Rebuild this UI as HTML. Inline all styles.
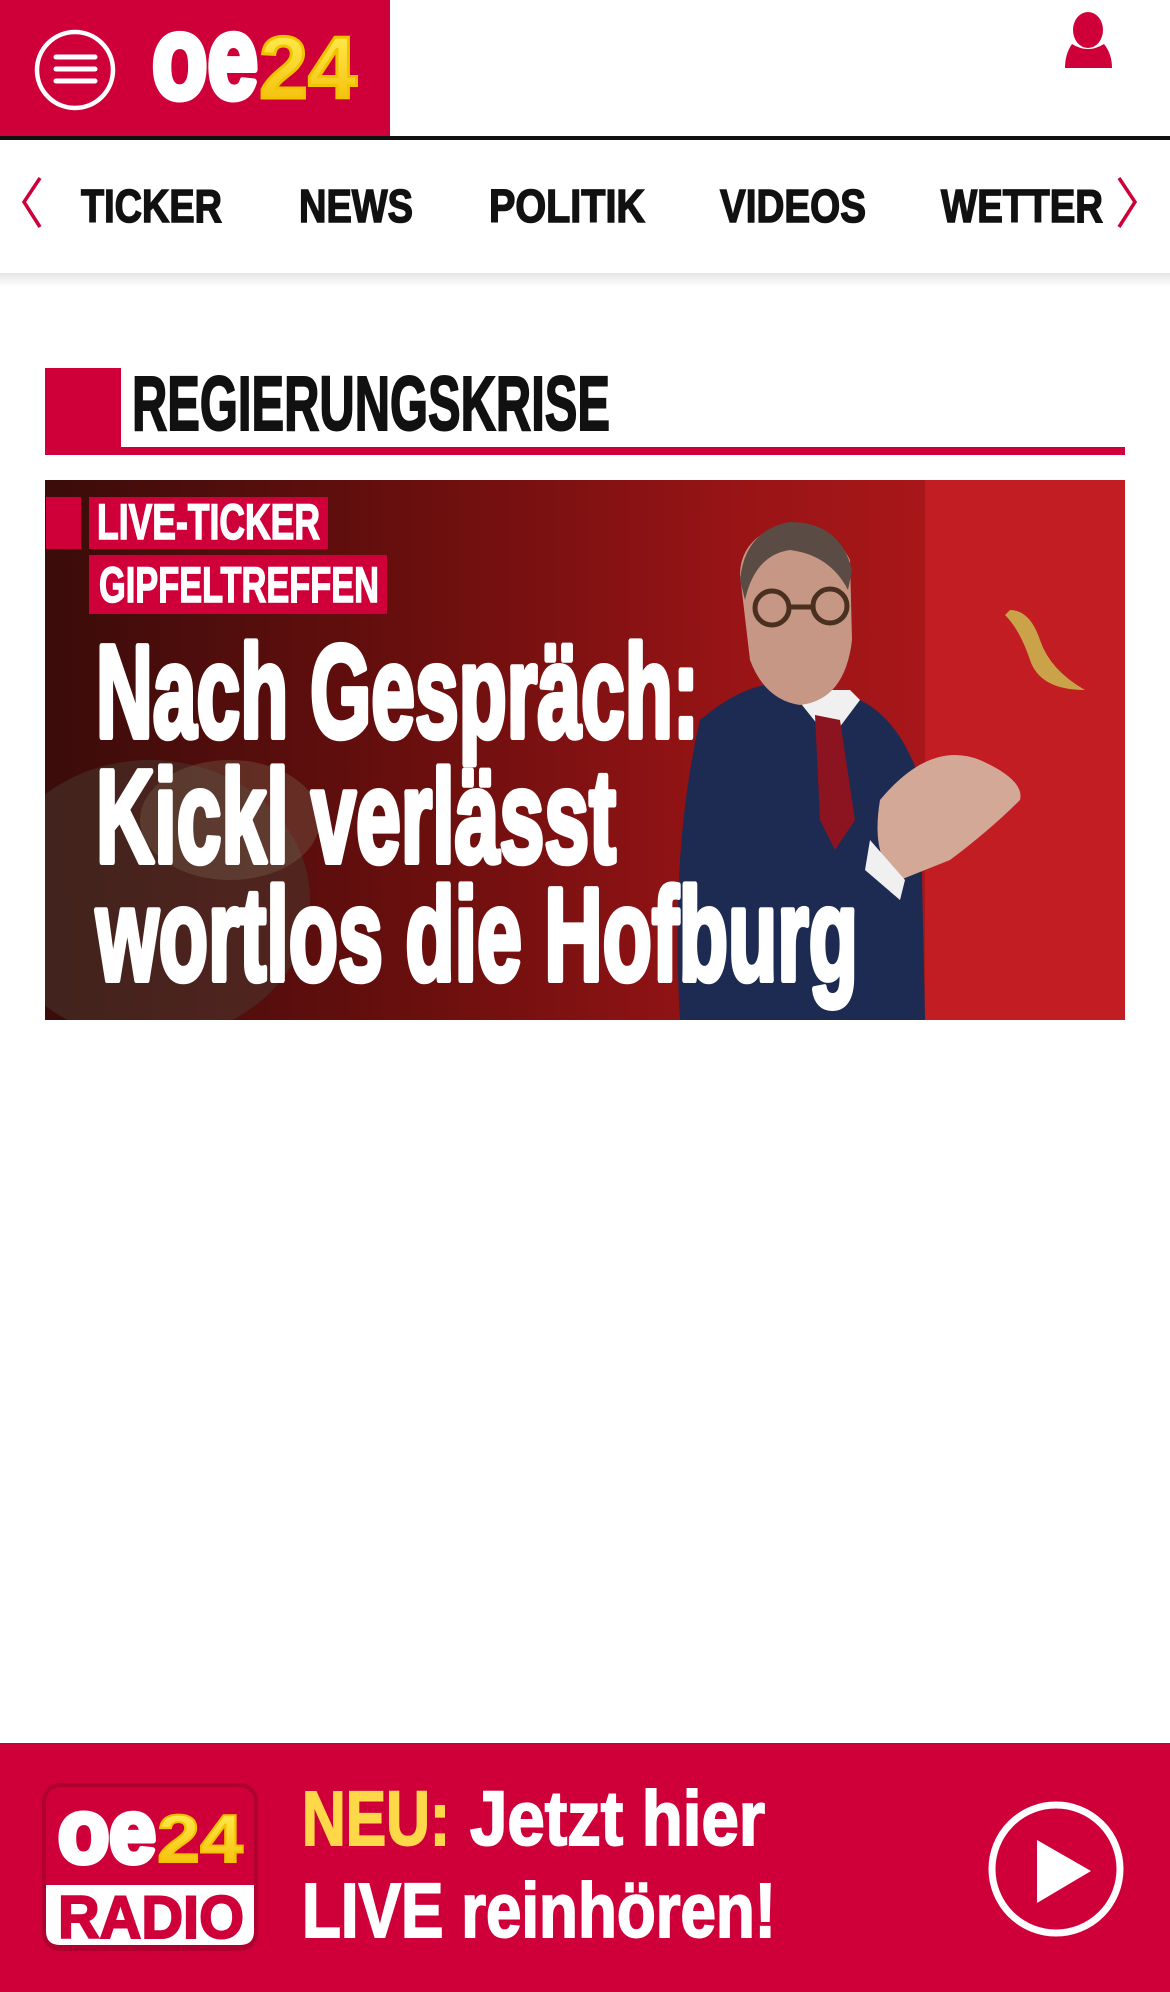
<!DOCTYPE html>
<html><head><meta charset="utf-8"><style>
html,body{margin:0;padding:0;width:1170px;height:1992px;overflow:hidden;background:#fff}
svg{display:block}
</style></head><body>
<svg width="1170" height="1992" viewBox="0 0 1170 1992" xmlns="http://www.w3.org/2000/svg" font-family="Liberation Sans Narrow, Liberation Sans, sans-serif">
<defs>
<linearGradient id="bg" x1="0" y1="0" x2="1" y2="0">
<stop offset="0" stop-color="#3a0c0a"/><stop offset="0.35" stop-color="#6a0f0e"/><stop offset="0.65" stop-color="#9a1416"/><stop offset="1" stop-color="#b71a1e"/>
</linearGradient>
<linearGradient id="yl" x1="0" y1="0" x2="0" y2="1"><stop offset="0" stop-color="#fff35a"/><stop offset="1" stop-color="#f4b800"/></linearGradient>
<linearGradient id="sh" x1="0" y1="0" x2="0" y2="1"><stop offset="0" stop-color="#000" stop-opacity="0.10"/><stop offset="1" stop-color="#000" stop-opacity="0"/></linearGradient>
<clipPath id="ic"><rect x="45" y="480" width="1080" height="540"/></clipPath>
</defs>
<!-- header -->
<rect x="0" y="0" width="390" height="136" fill="#cf0039"/>
<rect x="0" y="136" width="1170" height="4" fill="#111"/>
<circle cx="75" cy="70" r="38" fill="none" stroke="#fff" stroke-width="4.5"/>
<g stroke="#fff" stroke-width="5" stroke-linecap="round"><line x1="56" y1="57" x2="95" y2="57"/><line x1="56" y1="69" x2="95" y2="69"/><line x1="56" y1="81" x2="95" y2="81"/></g>
<text x="152" y="98" font-family="Liberation Sans, sans-serif" font-weight="bold" font-size="118" fill="#fff" stroke="#fff" stroke-width="7" stroke-linejoin="round" textLength="106" lengthAdjust="spacingAndGlyphs">oe</text>
<text x="259" y="98" font-family="Liberation Sans, sans-serif" font-weight="bold" font-size="88" fill="url(#yl)" stroke="#f2c400" stroke-width="3" textLength="98" lengthAdjust="spacingAndGlyphs">24</text>
<!-- user -->
<ellipse cx="1088" cy="30" rx="15" ry="18" fill="#cf0039"/>
<path d="M1072 44 Q1088 54 1104 44 Q1112 54 1112 68 L1065 68 Q1065 54 1072 44 Z" fill="#cf0039"/>
<!-- nav -->
<rect x="0" y="273" width="1170" height="14" fill="url(#sh)"/>
<path d="M40 178 L24 202 L40 227" fill="none" stroke="#cf0039" stroke-width="3.5"/>
<path d="M1119 178 L1135 202 L1119 227" fill="none" stroke="#cf0039" stroke-width="3.5"/>
<g font-weight="bold" font-size="46" fill="#111" stroke="#111" stroke-width="1.5">
<text x="81" y="222" textLength="141" lengthAdjust="spacingAndGlyphs">TICKER</text>
<text x="299" y="222" textLength="114" lengthAdjust="spacingAndGlyphs">NEWS</text>
<text x="489" y="222" textLength="156" lengthAdjust="spacingAndGlyphs">POLITIK</text>
<text x="720" y="222" textLength="146" lengthAdjust="spacingAndGlyphs">VIDEOS</text>
<text x="941" y="222" textLength="162" lengthAdjust="spacingAndGlyphs">WETTER</text>
</g>
<!-- section title -->
<rect x="45" y="368" width="76" height="87" fill="#cf0039"/>
<rect x="121" y="447" width="1004" height="8" fill="#cf0039"/>
<text x="132" y="430" font-weight="bold" font-size="77" fill="#111" stroke="#111" stroke-width="2" textLength="478" lengthAdjust="spacingAndGlyphs">REGIERUNGSKRISE</text>
<!-- image -->
<g clip-path="url(#ic)">
<rect x="45" y="480" width="1080" height="540" fill="url(#bg)"/>
<rect x="925" y="480" width="200" height="540" fill="#c21d22"/>
<ellipse cx="150" cy="900" rx="160" ry="140" fill="#4a3a30" opacity="0.5"/>
<ellipse cx="230" cy="820" rx="90" ry="60" fill="#7a6650" opacity="0.35"/>
<!-- person -->
<path d="M700 720 Q760 670 800 690 L860 700 Q900 720 920 780 L925 1020 L680 1020 Q670 850 700 720 Z" fill="#1d2a52"/>
<path d="M790 690 L830 740 L860 700 L850 690 Z" fill="#f0f0f0"/>
<path d="M815 715 L840 720 L855 820 L835 850 L820 820 Z" fill="#8c1420"/>
<path d="M740 575 Q740 540 780 525 Q830 520 850 560 L852 640 Q845 700 800 705 Q765 700 750 660 Z" fill="#c59784"/>
<path d="M740 580 Q745 530 790 522 Q840 522 852 570 L848 590 Q830 555 790 550 Q755 555 745 600 Z" fill="#5a4c44"/>
<g fill="none" stroke="#4a3020" stroke-width="5"><circle cx="772" cy="608" r="17"/><circle cx="830" cy="606" r="17"/><line x1="789" y1="607" x2="813" y2="607"/></g>
<path d="M880 800 Q930 740 980 760 Q1025 780 1020 800 Q990 830 950 860 L900 880 Q870 860 880 800 Z" fill="#d4a896"/>
<path d="M870 840 L905 880 L900 900 L865 870 Z" fill="#f0f0f0"/>
<path d="M1005 615 Q1020 630 1030 660 Q1040 690 1085 690 Q1050 670 1040 640 Q1030 610 1010 610 Z" fill="#c9a24a"/>
<!-- tags -->
<rect x="46" y="497" width="35" height="52" fill="#cf0039"/>
<rect x="89" y="497" width="239" height="52" fill="#cf0039"/>
<text x="97" y="539" font-weight="bold" font-size="50" fill="#fff" stroke="#fff" stroke-width="1.5" textLength="223" lengthAdjust="spacingAndGlyphs">LIVE-TICKER</text>
<rect x="89" y="555" width="298" height="59" fill="#cf0039"/>
<text x="99" y="602" font-weight="bold" font-size="50" fill="#fff" stroke="#fff" stroke-width="1.5" textLength="280" lengthAdjust="spacingAndGlyphs">GIPFELTREFFEN</text>
<!-- headline -->
<g font-weight="bold" font-size="132" fill="#fff" stroke="#fff" stroke-width="6" stroke-linejoin="round">
<text x="96" y="737" textLength="603" lengthAdjust="spacingAndGlyphs">Nach Gespräch:</text>
<text x="96" y="862" textLength="520" lengthAdjust="spacingAndGlyphs">Kickl verlässt</text>
<text x="96" y="980" textLength="762" lengthAdjust="spacingAndGlyphs">wortlos die Hofburg</text>
</g>
</g>
<!-- bottom banner -->
<rect x="0" y="1743" width="1170" height="249" fill="#cf0039"/>
<rect x="42" y="1783" width="216" height="168" rx="18" fill="#8a0026" opacity="0.45"/>
<rect x="46" y="1787" width="208" height="158" rx="14" fill="#cf0039"/>
<path d="M46 1885 L254 1885 L254 1931 Q254 1945 240 1945 L60 1945 Q46 1945 46 1931 Z" fill="#fff"/>
<text x="58" y="1862" font-family="Liberation Sans, sans-serif" font-weight="bold" font-size="90" fill="#fff" stroke="#fff" stroke-width="6" stroke-linejoin="round" textLength="98" lengthAdjust="spacingAndGlyphs">oe</text>
<text x="157" y="1862" font-family="Liberation Sans, sans-serif" font-weight="bold" font-size="68" fill="url(#yl)" stroke="#f2c400" stroke-width="2" textLength="86" lengthAdjust="spacingAndGlyphs">24</text>
<text x="58" y="1938" font-family="Liberation Sans, sans-serif" font-weight="bold" font-size="60" fill="#cf0039" stroke="#cf0039" stroke-width="2" textLength="186" lengthAdjust="spacingAndGlyphs">RADIO</text>
<g font-weight="bold" font-size="77" stroke-width="2">
<text x="302" y="1845" fill="#ffd84a" stroke="#ffd84a" textLength="148" lengthAdjust="spacingAndGlyphs">NEU:</text>
<text x="470" y="1845" fill="#fff" stroke="#fff" textLength="295" lengthAdjust="spacingAndGlyphs">Jetzt hier</text>
<text x="302" y="1937" fill="#fff" stroke="#fff" textLength="474" lengthAdjust="spacingAndGlyphs">LIVE reinhören!</text>
</g>
<circle cx="1056" cy="1869" r="64" fill="none" stroke="#fff" stroke-width="7"/>
<path d="M1037 1840 L1091 1871 L1037 1903 Z" fill="#fff"/>
</svg>
</body></html>
